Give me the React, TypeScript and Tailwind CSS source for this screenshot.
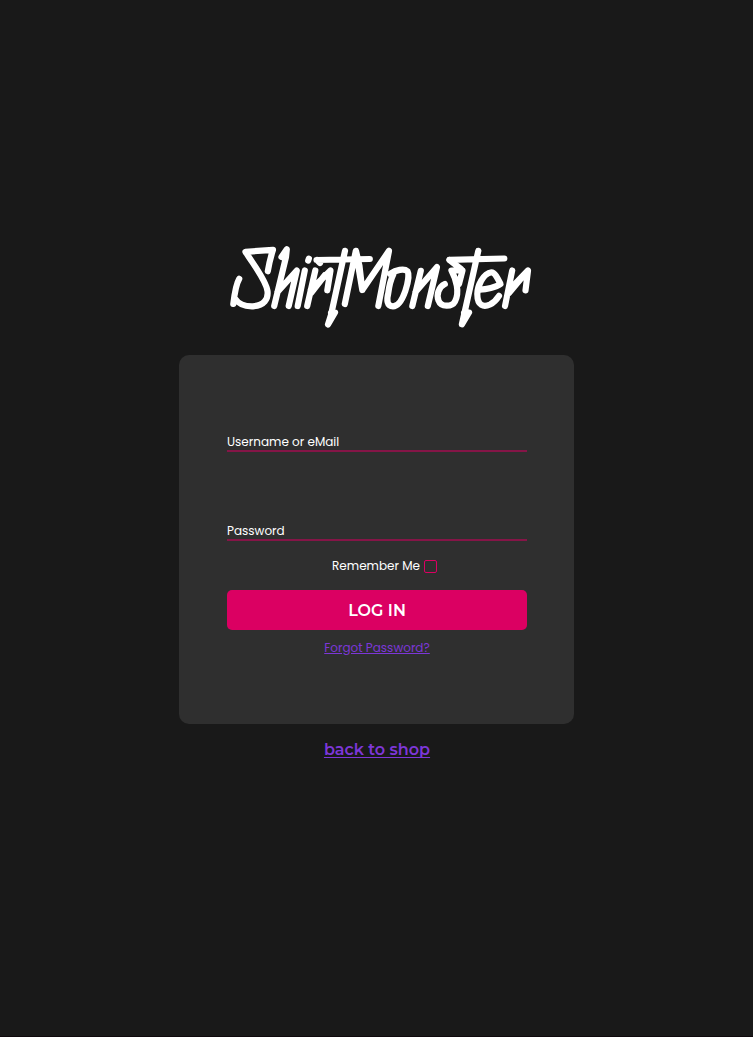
const strokes = [
  // S
  "M239.2 278.8 C236 284 234.5 294 233.3 304 M235 298.5 C239 305 246 306.5 253 306.3 C264 305.5 268.5 299 267.5 291 C266 280 253 264 245.5 251.8 L273 249.8 C271 256 269 264 267.8 271.3",
  // h
  "M281.5 257 L286.8 249.3 L286 257 L274.2 306 M277.5 292 L296.8 270.5 L288.7 306",
  // i
  "M304.8 270.5 L297.7 306 M308.9 258.6 L308.2 260.6",
  // r
  "M315.3 270.5 L307.2 306 M310.8 290 L330.5 270.5 L327.3 290.3 M311 293 L325 275",
  // t
  "M316.5 260 L369.8 259 M317 260 L320 263 M345 250.8 L331 315 L328 324.5 L335 312.5 L331 313",
  // M
  "M344.8 304 L355.8 251 L362.3 290 L389 250.8 L378.3 306 M356 251 L359.5 266 L362.3 290",
  // o
  "M390 273.8 C396 270 404 268 407.5 271.2 C411 277 403 306.3 393 306.3 C386.8 306.3 386.5 300 388.3 293 C389 287 390.5 280 393.5 273.8",
  // n
  "M420.8 270.8 L412.3 306 M415.5 292 L437 267 L427.8 306",
  // s
  "M444.8 284 C438.5 287 436.3 295 438.5 300.5 C441 307.5 452 307 455 301.5 C460 292 456 279 451.5 270.5 L462.5 270.5 L459 284 M461 269 L449.5 260",
  // t
  "M449.5 259.8 L504.3 258.5 M478.3 250.8 L464 315 L461.9 324.3 L469 312.5 L464 313",
  // e
  "M480 289.6 C486 289.3 496 287.3 500.5 284 C498 279 495 272.3 491.5 272.3 C483 273.5 477.3 286 477.3 294 C477.3 306.3 484 307.3 490 304.5 C494 302.5 497 299 499 295.8",
  // r
  "M512.2 270.5 L505 306 M508.3 291 L528 270.5 L525.5 290.3 M509 293 L524 275",
];

function Logo() {
  return (
    <svg
      viewBox="229 244 304 86"
      className="ml-[9px] h-[86px] w-[304px]"
      fill="none"
      stroke="#fff"
      strokeWidth="6.2"
      strokeLinecap="round"
      strokeLinejoin="round"
      role="img"
      aria-label="ShirtMonster"
    >
      {strokes.map((d) => (
        <path key={d} d={d} />
      ))}
    </svg>
  );
}

function Field({ label }: { label: string }) {
  return (
    <label className="flex h-[22px] items-start border-b-2 border-[#851547] text-xs leading-[24px]">
      {label}
    </label>
  );
}

export default function App() {
  return (
    <main className="flex h-[1037px] w-full flex-col items-center border-b border-[#0f080c] bg-[#191919] pt-[244px] font-['Poppins','Inter',sans-serif] text-white">
      <Logo />
      <form className="mt-[25px] flex h-[369px] w-[395px] flex-col rounded-[10px] bg-[#2f2f2f] pl-12 pr-[47px] pt-[75px]">
        <div className="flex flex-col gap-[67px]">
          <Field label="Username or eMail" />
          <Field label="Password" />
        </div>
        <div className="mt-[15px] flex h-5 items-center justify-center gap-1 pl-[15px] text-xs">
          <span>Remember Me</span>
          <span className="mt-px size-[13px] rounded-[2px] border border-[#db0062]" />
        </div>
        <button
          type="button"
          className="mt-[14px] h-10 w-[300px] rounded-[5px] bg-[#db0062] pt-0.5 font-['Montserrat','Inter',sans-serif] text-base font-semibold"
        >
          LOG IN
        </button>
        <a className="mt-2 self-center text-xs leading-5 text-[#7d37d8] underline">
          Forgot Password?
        </a>
      </form>
      <a className="mt-[14px] pl-px font-['Montserrat','Inter',sans-serif] text-base font-semibold text-[#7d37d8] underline decoration-1 underline-offset-2 [text-decoration-skip-ink:none]">
        back to shop
      </a>
    </main>
  );
}
